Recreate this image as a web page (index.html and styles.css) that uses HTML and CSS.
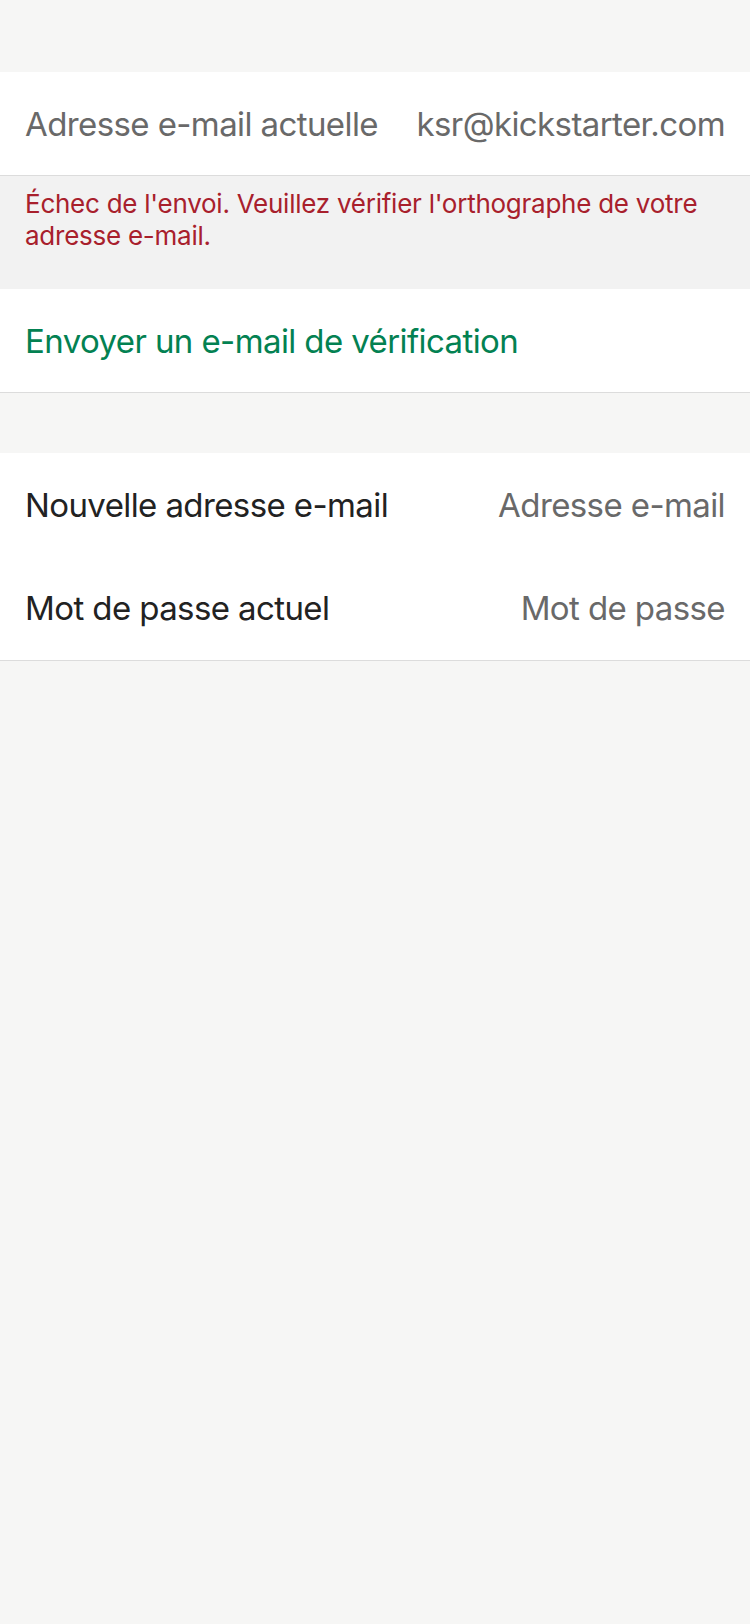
FILE: index.html
```html
<!DOCTYPE html>
<html lang="fr">
<head>
<meta charset="utf-8">
<link rel="stylesheet" href="styles.css">
</head>
<body>
<div class="screen">
  <div class="top-gap"></div>
  <section class="group">
    <div class="row">
      <span class="label muted">Adresse e-mail actuelle</span>
      <span class="value muted">ksr@kickstarter.com</span>
    </div>
  </section>
  <div class="error">Échec de l'envoi. Veuillez vérifier l'orthographe de votre adresse e-mail.</div>
  <section class="group bordered">
    <div class="row">
      <span class="label action">Envoyer un e-mail de vérification</span>
    </div>
  </section>
  <div class="gap"></div>
  <section class="group bordered">
    <div class="row row-a">
      <span class="label">Nouvelle adresse e-mail</span>
      <span class="value muted">Adresse e-mail</span>
    </div>
    <div class="row row-b">
      <span class="label">Mot de passe actuel</span>
      <span class="value muted">Mot de passe</span>
    </div>
  </section>
</div>
</body>
</html>
```

FILE: styles.css
```css
* { box-sizing: border-box; }
html, body {
  margin: 0;
  padding: 0;
  background: #f6f6f5;
}
body {
  font-family: Inter, "Noto Sans", sans-serif;
  -webkit-font-smoothing: antialiased;
}
.screen {
  width: 750px;
  min-height: 1624px;
  background: #f6f6f5;
  display: flex;
  flex-direction: column;
}
.top-gap { height: 72px; }
.gap { height: 60px; }
.group {
  background: #ffffff;
  display: flex;
  flex-direction: column;
}
.group.bordered, .group:first-of-type {
  border-bottom: 1px solid #dcdcdc;
}
.row {
  height: 103px;
  padding: 0 25px;
  display: flex;
  align-items: center;
  justify-content: space-between;
  font-size: 33px;
  letter-spacing: -0.6px;
  color: #222222;
}
.row-b { height: 104px; }
.muted { color: #696969; }
.action { color: #038152; }
.error {
  background: #f2f2f2;
  color: #a8202c;
  font-size: 26px;
  line-height: 32px;
  letter-spacing: -0.25px;
  padding: 12px 40px 37px 25px;
  height: 113px;
}
```
